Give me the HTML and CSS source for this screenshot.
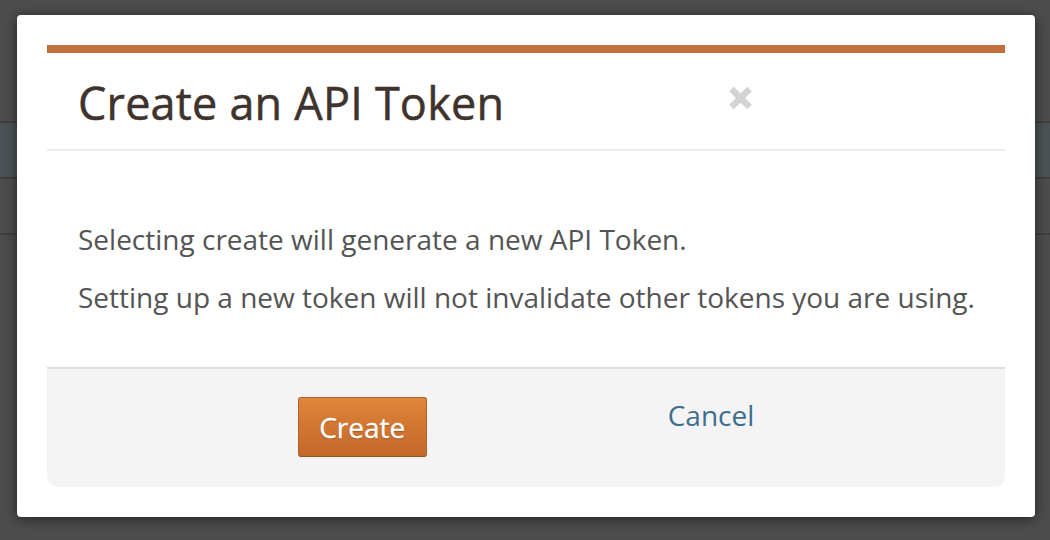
FILE: index.html
```html
<!DOCTYPE html>
<html>
<head>
<meta charset="utf-8">
<link rel="stylesheet" href="styles.css">
</head>
<body>
<div class="page">
  <div class="row row-sel"></div>
  <div class="row"></div>
  <div class="row row-last"></div>
</div>
<div class="modal">
  <div class="accent"></div>
  <div class="header">
    <h1 class="title">Create an API Token</h1>
    <span class="close" aria-label="Close">
      <svg width="25" height="24" viewBox="0 0 25 24"><path d="M3.5 3 L21.5 21 M21.5 3 L3.5 21" stroke="#d3d3d3" stroke-width="6.5" stroke-linecap="butt" fill="none"/></svg>
    </span>
  </div>
  <div class="body">
    <p>Selecting create will generate a new API Token.</p>
    <p>Setting up a new token will not invalidate other tokens you are using.</p>
  </div>
  <div class="footer">
    <button class="btn-create">Create</button>
    <a class="cancel" href="#">Cancel</a>
  </div>
</div>
</body>
</html>
```
FILE: styles.css
```css
html, body {
  margin: 0;
  padding: 0;
}
body {
  width: 1050px;
  height: 540px;
  background: #4c4c4c;
  font-family: "Open Sans", "Liberation Sans", sans-serif;
  overflow: hidden;
  position: relative;
}
.page {
  padding-top: 121px;
}
.row {
  height: 54px;
  border-top: 2px solid #3f3f3f;
}
.row-last {
  height: 0;
}
.row-sel {
  background: #4b5154;
}
.modal {
  position: absolute;
  left: 17px;
  top: 15px;
  width: 958px;
  height: 442px;
  padding: 30px;
  background: #fff;
  border-radius: 4px;
  box-shadow: 0 2px 12px rgba(0,0,0,0.55);
  display: flex;
  flex-direction: column;
}
.accent {
  height: 8px;
  background: #c26f3e;
}
.header {
  height: 96px;
  border-bottom: 2px solid #ececec;
  display: flex;
  align-items: center;
  padding-left: 31px;
}
.title {
  margin: 0;
  font-size: 45px;
  font-weight: 500;
  color: #3f332e;
  letter-spacing: 0.2px;
  position: relative;
  top: 1px;
  -webkit-text-stroke: 0.5px #3f332e;
}
.close {
  margin-left: 224px;
  display: flex;
  position: relative;
  top: -3px;
}
.body {
  flex: 1;
  padding: 69px 0 0 31px;
}
.body p {
  margin: 0 0 20px;
  font-size: 28px;
  line-height: 38px;
  color: #545454;
}
.footer {
  height: 120px;
  border-top: 2px solid #dedede;
  background: #f4f4f4;
  border-radius: 0 0 10px 10px;
  display: flex;
  justify-content: center;
  align-items: flex-start;
  gap: 241px;
  padding-top: 28px;
  box-sizing: border-box;
}
.btn-create {
  width: 129px;
  height: 60px;
  border: 1px solid #b0622a;
  border-bottom-color: #96521f;
  border-radius: 3px;
  background: linear-gradient(#e0853a, #c3682a);
  color: #fff;
  font-family: "Open Sans", "Liberation Sans", sans-serif;
  font-size: 28px;
  font-weight: 500;
  text-shadow: 0 1px 1px rgba(120,60,10,0.5);
  -webkit-text-stroke: 0.3px #fff;
  padding: 0;
  box-sizing: border-box;
}
.cancel {
  color: #3d6e8f;
  font-size: 28px;
  text-decoration: none;
  line-height: 36px;
}
```
